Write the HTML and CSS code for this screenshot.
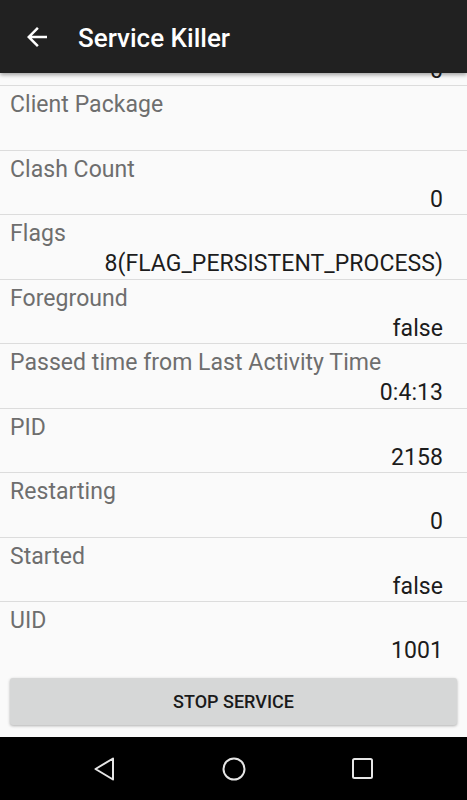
FILE: index.html
```html
<!DOCTYPE html>
<html>
<head>
<meta charset="utf-8">
<link rel="stylesheet" href="styles.css">
</head>
<body>
<div class="screen">
  <header class="appbar">
    <svg class="back" viewBox="0 0 24 24" width="30" height="30"><path fill="#fff" d="M20 11H7.83l5.59-5.59L12 4l-8 8 8 8 1.41-1.41L7.83 13H20v-2z"/></svg>
    <h1 class="title">Service Killer</h1>
  </header>
  <div class="list-wrap">
    <div class="list">
      <div class="row first"><div class="label">Client Count</div><div class="value">0</div></div>
      <div class="row"><div class="label">Client Package</div><div class="value"></div></div>
      <div class="row"><div class="label">Clash Count</div><div class="value">0</div></div>
      <div class="row"><div class="label">Flags</div><div class="value">8(FLAG_PERSISTENT_PROCESS)</div></div>
      <div class="row"><div class="label">Foreground</div><div class="value">false</div></div>
      <div class="row"><div class="label">Passed time from Last Activity Time</div><div class="value">0:4:13</div></div>
      <div class="row"><div class="label">PID</div><div class="value">2158</div></div>
      <div class="row"><div class="label">Restarting</div><div class="value">0</div></div>
      <div class="row"><div class="label">Started</div><div class="value">false</div></div>
      <div class="row"><div class="label">UID</div><div class="value">1001</div></div>
    </div>
  </div>
  <div class="actions">
    <button class="btn">STOP SERVICE</button>
  </div>
  <nav class="navbar">
    <svg width="24" height="26" viewBox="0 0 24 26"><path d="M21 2.5 L3.5 13 L21 23.5 Z" fill="none" stroke="#e6e6e6" stroke-width="2" stroke-linejoin="round"/></svg>
    <svg width="26" height="26" viewBox="0 0 26 26"><circle cx="13" cy="13" r="10.5" fill="none" stroke="#e6e6e6" stroke-width="2"/></svg>
    <svg width="24" height="24" viewBox="0 0 24 24"><rect x="2" y="2" width="19" height="19" rx="1.5" fill="none" stroke="#e6e6e6" stroke-width="2"/></svg>
  </nav>
</div>
</body>
</html>
```

FILE: styles.css
```css
html, body {
  margin: 0;
  padding: 0;
}
body {
  font-family: Roboto, "Liberation Sans", sans-serif;
  background: #fafafa;
}
.screen {
  width: 467px;
  height: 800px;
  display: flex;
  flex-direction: column;
  overflow: hidden;
}
.appbar {
  flex: 0 0 73px;
  height: 73px;
  background: #212121;
  display: flex;
  align-items: center;
  box-shadow: 0 2px 4px rgba(0,0,0,0.35);
  position: relative;
  z-index: 2;
}
.back {
  margin-left: 22px;
  display: block;
}
.title {
  margin: 3px 0 0 26px;
  color: #fff;
  font-size: 26px;
  font-weight: 500;
  line-height: 30px;
}
.list-wrap {
  flex: 1 1 auto;
  min-height: 0;
  overflow: hidden;
}
.list {
  margin-top: -51.5px;
}
.row {
  box-sizing: border-box;
  height: 64.5px;
  border-top: 1px solid #dcdcdc;
  padding: 4px 24px 0 10px;
  font-size: 23px;
  letter-spacing: 0.05px;
  line-height: 30px;
}
.row.first {
  border-top: none;
  height: 63.5px;
}
.label {
  color: #6e6e6e;
  height: 30px;
  white-space: nowrap;
}
.value {
  color: #1c1c1c;
  text-align: right;
  height: 30px;
  white-space: nowrap;
}
.actions {
  flex: 0 0 72px;
  box-sizing: border-box;
  padding: 13px 10px 12px;
}
.btn {
  display: block;
  width: 100%;
  height: 47px;
  border: none;
  border-radius: 3px;
  background: #d6d7d7;
  box-shadow: 0 1px 3px rgba(0,0,0,0.3);
  font-family: Roboto, "Liberation Sans", sans-serif;
  font-weight: 500;
  font-size: 18px;
  color: #1a1a1a;
  padding: 0;
}
.navbar {
  flex: 0 0 63px;
  background: #000;
  display: flex;
  align-items: center;
  justify-content: space-between;
  padding: 0 92px 0 92px;
}
.navbar svg {
  display: block;
}
```
